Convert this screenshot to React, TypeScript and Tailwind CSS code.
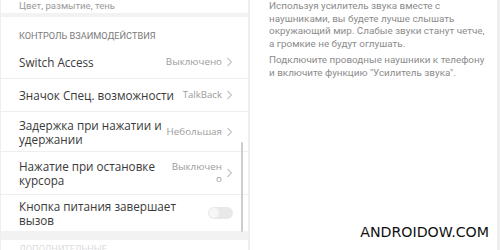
import React from "react";

const Chevron = () => (
  <svg width="7" height="10" viewBox="0 0 7 10" className="shrink-0">
    <polyline points="1.5,1 5.5,5 1.5,9" fill="none" stroke="#c4c4c4" strokeWidth="1.1" />
  </svg>
);

function Row({
  title,
  value,
  h,
  divider = true,
  toggle = false,
  latin = false,
}: {
  title: React.ReactNode;
  value?: React.ReactNode;
  h: string;
  divider?: boolean;
  toggle?: boolean;
  latin?: boolean;
}) {
  return (
    <div
      className={`shrink-0 flex items-center pl-[18px] pr-[15px] ${h} ${divider ? "border-b border-[#efefef]" : ""}`}
    >
      <div
        className="flex-1 whitespace-nowrap text-[11.7px] leading-[14px] text-[#3a3a3a]"
        style={{ fontFamily: "'Open Sans', Roboto, sans-serif" }}
      >
        {title}
      </div>
      {toggle ? (
        <div className="w-[25px] h-[12px] rounded-full bg-[#e8e8e8] flex items-center pl-[1px]">
          <div className="w-[10px] h-[10px] rounded-full bg-[#f6f6f6]" />
        </div>
      ) : (
        <div className="flex items-center gap-[4px]">
          <div
            className={`${latin ? "text-[9.6px]" : "text-[9.8px]"} whitespace-nowrap leading-[12px] text-[#9c9c9c] text-right`}
            style={{ fontFamily: "'Open Sans', Roboto, sans-serif" }}
          >
            {value}
          </div>
          <Chevron />
        </div>
      )}
    </div>
  );
}

export default function App() {
  return (
    <div
      className="w-[500px] h-[250px] overflow-hidden bg-[#eeeeee] flex"
      style={{ fontFamily: "Roboto, 'Noto Sans', sans-serif" }}
    >
      <div className="w-[247px] h-[250px] ml-[1px] flex flex-col relative overflow-hidden">
        <div className="shrink-0 h-[13px] bg-white overflow-hidden pl-[18px] flex items-end">
          <div className="text-[9.6px] leading-[12px] text-[#9a9a9a] mb-[1px]">Цвет, размытие, тень</div>
        </div>
        <div className="shrink-0 h-[4px] bg-[#f2f2f2]" />
        <div className="shrink-0 h-[214px] bg-white flex flex-col">
          <div className="shrink-0 h-[29px] pl-[18px] flex items-end pb-[4px] text-[9.2px] leading-[12px] text-[#7a7a7a]">
            КОНТРОЛЬ ВЗАИМОДЕЙСТВИЯ
          </div>
          <Row h="h-[33px]" title="Switch Access" value="Выключено" />
          <Row h="h-[33px]" title="Значок Спец. возможности" value="TalkBack" latin />
          <Row
            h="h-[40px]"
            title={
              <>
                Задержка при нажатии и
                <br />
                удержании
              </>
            }
            value="Небольшая"
          />
          <Row
            h="h-[43px]"
            title={
              <>
                Нажатие при остановке
                <br />
                курсора
              </>
            }
            value={
              <>
                Выключен
                <br />о
              </>
            }
          />
          <Row
            h="h-[36px]"
            divider={false}
            toggle
            title={
              <>
                Кнопка питания завершает
                <br />
                вызов
              </>
            }
          />
        </div>
        <div className="shrink-0 h-[9px] bg-[#f2f2f2]" />
        <div className="shrink-0 h-[20px] bg-white pl-[18px] pt-[3px] text-[9.2px] leading-[12px] text-[#dcdcdc]">
          ДОПОЛНИТЕЛЬНЫЕ
        </div>
        <div className="absolute left-[240px] top-[142px] w-[2px] h-[90px] bg-[#cdcdcd] rounded-full" />
      </div>
      <div className="w-[2px] shrink-0" />
      <div className="w-[247px] shrink-0 bg-white relative pl-[19px] pr-[10px]">
        <p className="text-[9.9px] leading-[12.5px] text-[#8c8c8c]">
          Используя усилитель звука вместе с наушниками, вы будете лучше слышать окружающий мир. Слабые звуки станут четче, а громкие не будут оглушать.
        </p>
        <p className="mt-[4px] text-[9.9px] leading-[12.5px] text-[#8c8c8c]">
          Подключите проводные наушники к телефону и включите функцию "Усилитель звука".
        </p>
        <div
          className="absolute right-[8px] bottom-[11px] text-[14.2px] leading-[14px] text-[#111111]"
          style={{ fontFamily: "'DejaVu Sans', sans-serif" }}
        >
          ANDROIDOW.COM
        </div>
      </div>
    </div>
  );
}
